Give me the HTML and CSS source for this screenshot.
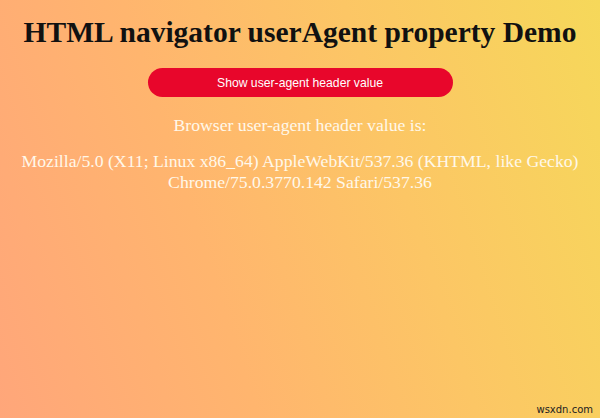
FILE: index.html
```html
<!DOCTYPE html>
<html>
<head>
<meta charset="utf-8">
<link rel="stylesheet" href="styles.css">
</head>
<body>
<div class="page">
  <h1 class="title">HTML navigator userAgent property Demo</h1>
  <button class="btn">Show user-agent header value</button>
  <p class="label">Browser user-agent header value is:</p>
  <p class="value">Mozilla/5.0 (X11; Linux x86_64) AppleWebKit/537.36 (KHTML, like Gecko) Chrome/75.0.3770.142 Safari/537.36</p>
  <div class="spacer"></div>
  <div class="mark">wsxdn.com</div>
</div>
</body>
</html>
```
FILE: styles.css
```css
html, body {
  margin: 0;
  padding: 0;
  height: 100%;
}
body {
  background: linear-gradient(72deg, #ffa67a 0%, #ffb56e 35%, #fcc665 65%, #f6d85a 100%);
  font-family: "Liberation Serif", "Times New Roman", serif;
  overflow: hidden;
}
.page {
  height: 418px;
  display: flex;
  flex-direction: column;
  align-items: center;
  text-align: center;
}
.title {
  margin: 14px 0 0;
  font-size: 29.5px;
  font-weight: bold;
  color: #111;
  line-height: 36px;
}
.btn {
  margin-top: 18px;
  width: 305px;
  height: 29px;
  border: none;
  border-radius: 15px;
  background: #e8062b;
  color: #fff;
  font-family: "Liberation Sans", Arial, sans-serif;
  font-size: 12.2px;
  cursor: pointer;
}
.label {
  margin: 18px 0 0;
  font-size: 17.7px;
  color: #fff8ea;
  line-height: 21px;
}
.value {
  margin: 15px 0 0;
  font-size: 17.7px;
  color: #fff8ea;
  line-height: 21px;
  padding: 0 10px;
}
.spacer {
  flex: 1;
}
.mark {
  align-self: flex-end;
  margin: 0 7px 2px 0;
  font-family: "DejaVu Sans", sans-serif;
  font-size: 10px;
  color: #222;
  line-height: 12px;
}
```
